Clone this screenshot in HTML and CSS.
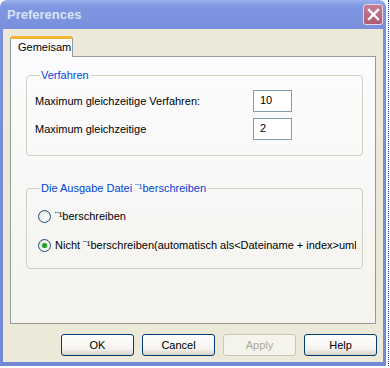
FILE: index.html
```html
<!DOCTYPE html>
<html>
<head>
<meta charset="utf-8">
<link rel="stylesheet" href="styles.css">
</head>
<body>
<div class="screen">
  <div class="window">
    <div class="titlebar">
      <span class="title">Preferences</span>
      <span class="close">
        <svg width="13" height="13" viewBox="0 0 13 13"><path d="M2 2 L11 11 M11 2 L2 11" stroke="#fff" stroke-width="2.4" stroke-linecap="square"/></svg>
      </span>
    </div>
    <div class="client">
      <div class="tabs"><div class="tab">Gemeisam</div></div>
      <div class="panel">
        <fieldset class="group g1">
          <legend>Verfahren</legend>
          <div class="row r1"><span class="lbl">Maximum gleichzeitige Verfahren:</span><span class="input">10</span></div>
          <div class="row r2"><span class="lbl">Maximum gleichzeitige</span><span class="input">2</span></div>
        </fieldset>
        <fieldset class="group g2">
          <legend>Die Ausgabe Datei ¨¹berschreiben</legend>
          <div class="radio rd1"><span class="dot"></span><span class="rtext">¨¹berschreiben</span></div>
          <div class="radio rd2"><span class="dot on"></span><span class="rtext clip">Nicht ¨¹berschreiben(automatisch als&lt;Dateiname + index&gt;umbenennen)</span></div>
        </fieldset>
      </div>
      <div class="buttons">
        <span class="btn">OK</span>
        <span class="btn">Cancel</span>
        <span class="btn disabled">Apply</span>
        <span class="btn">Help</span>
      </div>
    </div>
  </div>
  <div class="focus"></div>
</div>
</body>
</html>
```
FILE: styles.css
```css
* { box-sizing: border-box; }
body { margin: 0; background: #fff; font-family: "Liberation Sans", Arial, sans-serif; font-size: 11px; color: #000; }
.screen { display: flex; align-items: flex-start; gap: 2px; }
.window {
  width: 386px; height: 366px;
  background: linear-gradient(to bottom, #9ab0ee 0px, #7f97e2 6px, #7a90dc 29px, #7489d6 100%);
  border-radius: 7px 7px 0 0;
  display: flex; flex-direction: column;
}
.focus { width: 1px; height: 366px; border-left: 1px dotted #1c3c8c; }
.titlebar { height: 29px; display: flex; align-items: center; justify-content: space-between; padding: 0 3px 0 7px; }
.title { font-family: "Liberation Sans", Arial, sans-serif; font-weight: bold; font-size: 13px; color: #d9e2f7; }
.close {
  width: 20px; height: 21px; border-radius: 3px; border: 1px solid #e6d6e2;
  background: linear-gradient(to bottom, #c77d92, #b05a74);
  display: flex; align-items: center; justify-content: center;
}
.client { flex: 1; margin: 0 3px 4px 3px; background: #ece9d8; padding: 7px 7px 0 7px; display: flex; flex-direction: column; }
.tabs { height: 20px; display: flex; }
.tab {
  position: relative; z-index: 1;
  width: 63px; height: 21px;
  background: #fcfcfe;
  border: 1px solid #919b9c; border-bottom: none; border-top: 3px solid #f5b431;
  border-radius: 3px 3px 0 0;
  padding: 2px 0 0 7px;
}
.panel {
  height: 268px;
  border: 1px solid #919b9c;
  background: linear-gradient(to bottom, #fcfcfe, #f4f3ee);
  padding: 12px 12px 0 15px;
}
.group {
  margin: 0; border: 1px solid #d0d0bf; border-radius: 4px;
  padding: 0 0 0 8px; min-width: 0;
}
.group legend { color: #0046d5; padding: 0 2px 0 1px; margin-left: 5px; }
.g1 { height: 87px; }
.g2 { height: 87px; margin-top: 26px; }
.row { display: flex; align-items: center; height: 22px; }
.r1 { margin-top: 9px; }
.r2 { margin-top: 6px; }
.lbl { width: 218px; }
.input { width: 39px; height: 22px; border: 1px solid #7f9db9; background: #fff; padding: 3px 0 0 6px; }
.radio { display: flex; align-items: center; height: 14px; }
.rd1 { margin-top: 15px; }
.rd2 { margin-top: 15px; }
.dot {
  width: 13px; height: 13px; border-radius: 50%; border: 1px solid #1c5180;
  background: radial-gradient(circle at 65% 65%, #fff 0, #ecebe6 60%, #d6d3ca 100%);
  margin-left: 3px; margin-right: 4px; flex: none;
  display: flex; align-items: center; justify-content: center;
}
.dot.on::after { content: ""; width: 5px; height: 5px; border-radius: 50%; background: #21a121; box-shadow: 0 0 1px #5fd25f; }
.rtext { white-space: nowrap; }
.rtext.clip { overflow: hidden; width: 301px; }
.buttons { display: flex; justify-content: flex-end; gap: 8px; margin-top: 10px; margin-right: -1px; }
.btn {
  width: 73px; height: 22px; border: 1px solid #003c74; border-radius: 3px;
  background: linear-gradient(to bottom, #ffffff, #f4f3ee 70%, #d6d0c5);
  display: flex; align-items: center; justify-content: center;
}
.btn.disabled { border-color: #c9c7ba; background: #f5f4ea; color: #aca899; }
```
